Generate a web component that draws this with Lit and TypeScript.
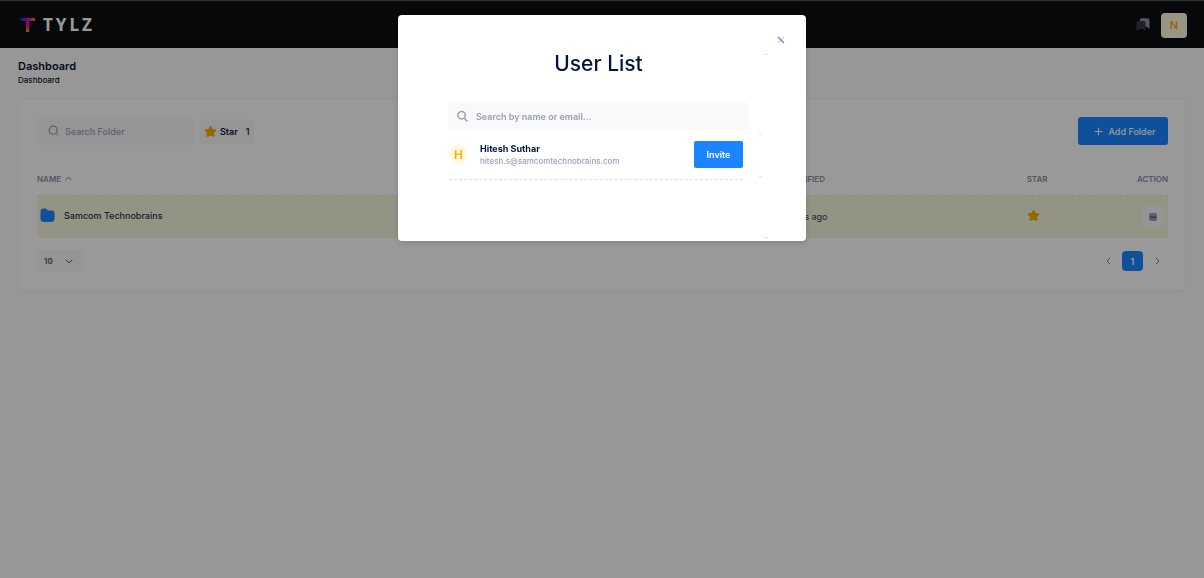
import { LitElement, html, css, svg } from "lit";
import { customElement, property } from "lit/decorators.js";

const star = svg`<path d="M12 1.800c.8 0 1.400.4 1.700 1.100l2 4.300 4.900.7c2 .3 2.600 2.200 1.200 3.500l-3.300 3.200 1 4.800c.4 1.900-1.300 3-2.900 2.100L12 19.500l-4.600 2c-1.600.9-3.300-.2-2.900-2.100l1-4.800-3.300-3.200C.8 10.100 1.400 8.200 3.400 7.900l4.900-.7 2-4.300c.3-.7.9-1.100 1.700-1.100z"/>`;

@customElement("tylz-header")
class TylzHeader extends LitElement {
  static styles = css`
    :host {
      display: flex;
      align-items: center;
      justify-content: space-between;
      height: 48px;
      box-sizing: border-box;
      padding: 1px 17px 0 20px;
      background: #0d0e12;
      border-top: 1px solid #4a564a;
    }
    .logo {
      display: flex;
      align-items: center;
      gap: 8px;
      color: #fff;
      text-decoration: none;
      font: 700 17px/20px "Noto Sans", sans-serif;
      letter-spacing: 3px;
    }
    .tools {
      display: flex;
      align-items: center;
      gap: 11px;
    }
    button {
      border: 0;
      padding: 0;
      background: none;
      display: block;
    }
    svg {
      display: block;
    }
    .user {
      width: 26px;
      height: 25px;
      border-radius: 4px;
      background: #fff8dd;
      color: #f6b100;
      font: 600 11px/25px Inter, sans-serif;
    }
  `;
  render() {
    return html`
      <a class="logo" href="#">
        <svg width="15" height="14" viewBox="0 0 15 14" aria-hidden="true">
          <defs>
            <linearGradient id="bar" x1="0" x2="1"><stop offset="0" stop-color="#2030ff" /><stop offset=".25" stop-color="#6018f0" /><stop offset=".5" stop-color="#d010b8" /><stop offset=".75" stop-color="#f03060" /><stop offset="1" stop-color="#f88a10" /></linearGradient>
            <linearGradient id="stem" x1="0" x2="0" y1="0" y2="1"><stop offset="0" stop-color="#c010c8" /><stop offset=".5" stop-color="#e02090" /><stop offset="1" stop-color="#f8900c" /></linearGradient>
          </defs>
          <path d="M0 0h15v3H1.200z" fill="url(#bar)" />
          <path d="M6 3h3.200V14H6z" fill="url(#stem)" />
        </svg>
        <span>TYLZ</span>
      </a>
      <div class="tools">
        <button aria-label="Saved">
          <svg width="14" height="14" viewBox="0 0 14 14">
            <path d="M5.500.3h6A2 2 0 0 1 13.500 2.300v8.400l-2.200-1.500L4 6V1.800A1.500 1.500 0 0 1 5.500.3z" fill="#8a90ae" />
            <path d="M2.500 3h5a2 2 0 0 1 2 2v7.800L6.600 11H4.200L.5 13V5a2 2 0 0 1 2-2z" fill="#363843" />
          </svg>
        </button>
        <button class="user" aria-label="Account N">N</button>
      </div>
    `;
  }
}

@customElement("folder-panel")
class FolderPanel extends LitElement {
  static styles = css`
    :host {
      display: block;
      margin: 0 18px;
      padding: 18px 17px 18px 18px;
      border: 1px solid #f5f5f7;
      border-radius: 6px;
      background: #fff;
      box-shadow: 0 2px 3px rgba(0, 0, 0, 0.02);
    }
    svg {
      display: block;
      flex: none;
    }
    button,
    input,
    select {
      font: inherit;
      color: inherit;
      border: 0;
      margin: 0;
      box-sizing: border-box;
    }
    .bar {
      display: flex;
      align-items: center;
      gap: 6px;
    }
    .search {
      display: flex;
      align-items: center;
      gap: 5px;
      width: 157px;
      height: 28px;
      box-sizing: border-box;
      padding: 0 11px;
      border-radius: 5px;
      background: #f9f9f9;
      color: #99a1b7;
    }
    .search input {
      min-width: 0;
      flex: 1;
      padding: 0;
      background: none;
      font-size: 9px;
      font-weight: 500;
      outline: 0;
    }
    ::placeholder {
      color: #99a1b7;
      opacity: 1;
    }
    .star {
      display: flex;
      align-items: center;
      gap: 3px;
      height: 25px;
      padding: 0 4px;
      border-radius: 3px;
      background: #f9f9f9;
      color: #071437;
      font-size: 9px;
      font-weight: 600;
    }
    .count {
      margin-left: 5px;
      font-weight: 500;
    }
    .add {
      display: flex;
      align-items: center;
      justify-content: center;
      gap: 6px;
      width: 90px;
      height: 28px;
      margin-left: auto;
      padding: 0 0 0 3px;
      border-radius: 3px;
      background: #1b84ff;
      color: #fff;
      font-size: 9px;
      font-weight: 500;
    }
    table {
      width: 100%;
      margin-top: 17px;
      border-collapse: collapse;
      table-layout: fixed;
    }
    th {
      height: 33px;
      padding: 0;
      text-align: left;
      font-size: 8px;
      font-weight: 600;
      color: #8b91a8;
    }
    .sort {
      display: flex;
      align-items: center;
      gap: 4px;
    }
    td {
      height: 38px;
      padding: 0 0 4px;
      background: #f5f7dc;
      border-top: 1px dashed #e8eadc;
      font-weight: 500;
      color: #4b5675;
      font-size: 9px;
    }
    td.date,
    td.act {
      height: 41px;
      padding: 0 0 1px;
    }
    .when {
      width: 23.300%;
    }
    .starred {
      width: 6%;
    }
    .act {
      width: 6.500%;
      text-align: right;
    }
    .name {
      display: flex;
      align-items: center;
      gap: 9px;
      padding-left: 3px;
      color: #252f4a;
    }
    .more {
      display: inline-grid;
      place-items: center;
      width: 22px;
      height: 22px;
      margin-right: 4px;
      padding: 0;
      border-radius: 3px;
      background: #f9f9f9;
      vertical-align: middle;
    }
    .foot {
      display: flex;
      justify-content: space-between;
      align-items: center;
      margin-top: 12px;
    }
    .size {
      display: grid;
      align-items: center;
      width: 46px;
      color: #4b5675;
    }
    .size select {
      grid-area: 1 / 1;
      width: 100%;
      height: 22px;
      padding: 0 7px 1px;
      border-radius: 4px;
      background: #f9f9f9;
      appearance: none;
      font-size: 8px;
      font-weight: 600;
    }
    .size svg {
      grid-area: 1 / 1;
      justify-self: end;
      margin-right: 10px;
      pointer-events: none;
    }
    nav {
      display: flex;
      align-items: center;
      color: #78829d;
      padding-right: 1px;
    }
    nav button {
      display: grid;
      place-items: center;
      width: 20px;
      height: 20px;
      padding: 0;
      background: none;
    }
    nav .current {
      width: 21px;
      margin: 0 4px;
      border-radius: 4px;
      background: #1b84ff;
      color: #fff;
      font-size: 9px;
      font-weight: 600;
    }
  `;
  render() {
    return html`
      <div class="bar">
        <label class="search">
          <svg width="12" height="12" viewBox="0 0 12 12" fill="none" stroke="currentColor" stroke-width="1.300"><circle cx="5.200" cy="5.200" r="4" /><path d="M8.800 9l1 1" /></svg>
          <input type="text" placeholder="Search Folder" aria-label="Search Folder" />
        </label>
        <button class="star">
          <svg width="13" height="13" viewBox="0 0 24 24" fill="#f6b100">${star}</svg>
          <span>Star</span><span class="count">1</span>
        </button>
        <button class="add">
          <svg width="9" height="9" viewBox="0 0 9 9" stroke="#fff" stroke-width="1.100"><path d="M4.500.7v7.600M.7 4.500h7.600" /></svg>
          Add Folder
        </button>
      </div>
      <table>
        <thead>
          <tr>
            <th><span class="sort">NAME <svg width="7" height="5" viewBox="0 0 7 5" fill="none" stroke="#78829d"><path d="M.7 4l2.800-2.900L6.300 4" /></svg></span></th>
            <th class="when">LAST MODIFIED</th>
            <th class="starred">STAR</th>
            <th class="act">ACTION</th>
          </tr>
        </thead>
        <tbody>
          <tr>
            <td>
              <span class="name">
                <svg width="15" height="15" viewBox="0 0 15 15" fill="#1b84ff"><path d="M3.500.6h1.600c1 0 1.600.4 2.100 1.100l.6.9h3.700c2 0 3 1 3 3v5.200c0 2-1.200 3.200-3.200 3.200H3.700c-2 0-3.200-1.200-3.200-3.200V3.600c0-2 1-3 3-3z" /></svg>
                Samcom Technobrains
              </span>
            </td>
            <td class="date">21 minutes ago</td>
            <td><svg width="13" height="13" viewBox="0 0 24 24" fill="#f6b100" role="img" aria-label="Starred">${star}</svg></td>
            <td class="act">
              <button class="more" aria-label="More actions">
                <svg width="8" height="8" viewBox="0 0 8 8"><rect width="8" height="8" rx="2" fill="#99a1b7" /><path d="M1.200 3.500h1.400v1.200H1.200zM3.300 3.500h1.400v1.200H3.300zM5.400 3.500h1.400v1.200H5.400z" fill="#252f4a" /></svg>
              </button>
            </td>
          </tr>
        </tbody>
      </table>
      <div class="foot">
        <label class="size">
          <select aria-label="Rows per page"><option>10</option><option>25</option><option>50</option></select>
          <svg width="8" height="5" viewBox="0 0 8 5" fill="none" stroke="currentColor"><path d="M.8.7L4 4 7.200.7" /></svg>
        </label>
        <nav aria-label="Pages">
          <button aria-label="Previous"><svg width="5" height="8" viewBox="0 0 5 8" fill="none" stroke="currentColor"><path d="M4.200.8L1 4l3.200 3.200" /></svg></button>
          <button class="current" aria-current="page">1</button>
          <button aria-label="Next"><svg width="5" height="8" viewBox="0 0 5 8" fill="none" stroke="currentColor"><path d="M.8.8L4 4 .8 7.200" /></svg></button>
        </nav>
      </div>
    `;
  }
}

interface User {
  name: string;
  email: string;
}

@customElement("user-list-dialog")
class UserListDialog extends LitElement {
  @property({ attribute: false }) users: User[] = [];
  static styles = css`
    :host {
      display: block;
      position: relative;
      width: 408px;
      box-sizing: border-box;
      padding: 16px 16px 61px 50px;
      border-radius: 4px;
      background: #fff;
      color: #071437;
      box-shadow: 0 2px 6px rgba(0, 0, 0, 0.15);
    }
    svg {
      display: block;
      flex: none;
    }
    button,
    input {
      font: inherit;
      border: 0;
      margin: 0;
      padding: 0;
      background: none;
    }
    .close {
      display: block;
      margin-left: auto;
      padding: 5px;
    }
    .body {
      padding-right: 41px;
    }
    h1 {
      margin: 0 0 25px;
      padding: 2px 0 0;
      font-size: 21px;
      line-height: 26px;
      font-weight: 500;
      text-align: center;
    }
    .search {
      display: flex;
      align-items: center;
      gap: 8px;
      height: 28px;
      padding: 0 8px 0 9px;
      border-radius: 5px;
      background: #f9f9f9;
    }
    .search input {
      flex: 1;
      min-width: 0;
      outline: 0;
      font-size: 9px;
      font-weight: 600;
    }
    ::placeholder {
      color: #99a1b7;
      opacity: 1;
    }
    ul {
      list-style: none;
      margin: 0;
      padding: 0 6px 0 1px;
    }
    li {
      display: flex;
      align-items: center;
      height: 49px;
      border-bottom: 1px dashed #dbdfe9;
    }
    .avatar {
      width: 19px;
      border-radius: 50%;
      background: #fff8dd;
      color: #f6b100;
      font-size: 12px;
      line-height: 19px;
      font-weight: 600;
      text-align: center;
    }
    .who {
      flex: 1;
      padding-left: 12px;
    }
    .who b {
      display: block;
      font-size: 9px;
      line-height: 13px;
      font-weight: 700;
    }
    .who a {
      display: block;
      color: #99a1b7;
      text-decoration: none;
      font-size: 8px;
      line-height: 13px;
      font-weight: 500;
    }
    .invite {
      width: 49px;
      height: 27px;
      border-radius: 2px;
      background: #1b84ff;
      color: #fff;
      font-size: 9px;
      font-weight: 600;
    }
    .arrow {
      position: absolute;
      width: 3px;
      height: 1px;
      background: #e4e4e6;
    }
    .outer {
      right: 38px;
    }
    .inner {
      right: 44px;
    }
    .top {
      top: 39px;
    }
    .bottom {
      bottom: 3px;
    }
    .list-top {
      top: 119px;
    }
    .list-bottom {
      top: 161px;
    }
  `;
  render() {
    return html`
      <button class="close" aria-label="Close">
        <svg width="8" height="8" viewBox="0 0 8 8" stroke="#7380a4"><path d="M1 1l6 6" stroke-width="1.200" /><path d="M7 1L1 7" stroke-opacity=".5" /></svg>
      </button>
      <div class="body">
        <h1 id="title">User List</h1>
        <label class="search">
          <svg width="11" height="12" viewBox="0 0 11 12" fill="none" stroke="#99a1b7" stroke-width="1.500"><circle cx="4.600" cy="5.200" r="3.700" /><path d="M7.200 8.200l3.200 3.200" /></svg>
          <input type="text" placeholder="Search by name or email..." aria-label="Search by name or email" />
        </label>
        <ul>
          ${this.users.map(
            (u) => html`<li>
              <span class="avatar">${u.name[0]}</span>
              <div class="who"><b>${u.name}</b><a href="mailto:${u.email}">${u.email}</a></div>
              <button class="invite">Invite</button>
            </li>`
          )}
        </ul>
      </div>
      <i class="arrow outer top"></i><i class="arrow outer bottom"></i>
      <i class="arrow inner list-top"></i><i class="arrow inner list-bottom"></i>
    `;
  }
}

@customElement("app-root")
class AppRoot extends LitElement {
  static styles = css`
    :host {
      display: block;
      min-height: 100vh;
      background: #fcfcfc;
      color: #071437;
      font-family: Inter, sans-serif;
    }
    .heading {
      padding: 11px 18px 12px;
    }
    h2 {
      margin: 0;
      font-size: 11px;
      line-height: 15px;
      font-weight: 600;
    }
    .crumb {
      display: block;
      font-size: 8px;
      line-height: 12px;
      font-weight: 500;
    }
    .overlay {
      position: fixed;
      inset: 0;
      display: flex;
      justify-content: center;
      align-items: flex-start;
      padding-top: 15px;
      background: rgba(0, 0, 0, 0.4);
    }
  `;
  render() {
    return html`
      <tylz-header></tylz-header>
      <main>
        <div class="heading">
          <h2>Dashboard</h2>
          <span class="crumb">Dashboard</span>
        </div>
        <folder-panel></folder-panel>
      </main>
      <div class="overlay">
        <user-list-dialog
          role="dialog"
          aria-modal="true"
          aria-label="User List"
          .users=${[{ name: "Hitesh Suthar", email: "hitesh.s@samcomtechnobrains.com" }]}
        ></user-list-dialog>
      </div>
    `;
  }
}
